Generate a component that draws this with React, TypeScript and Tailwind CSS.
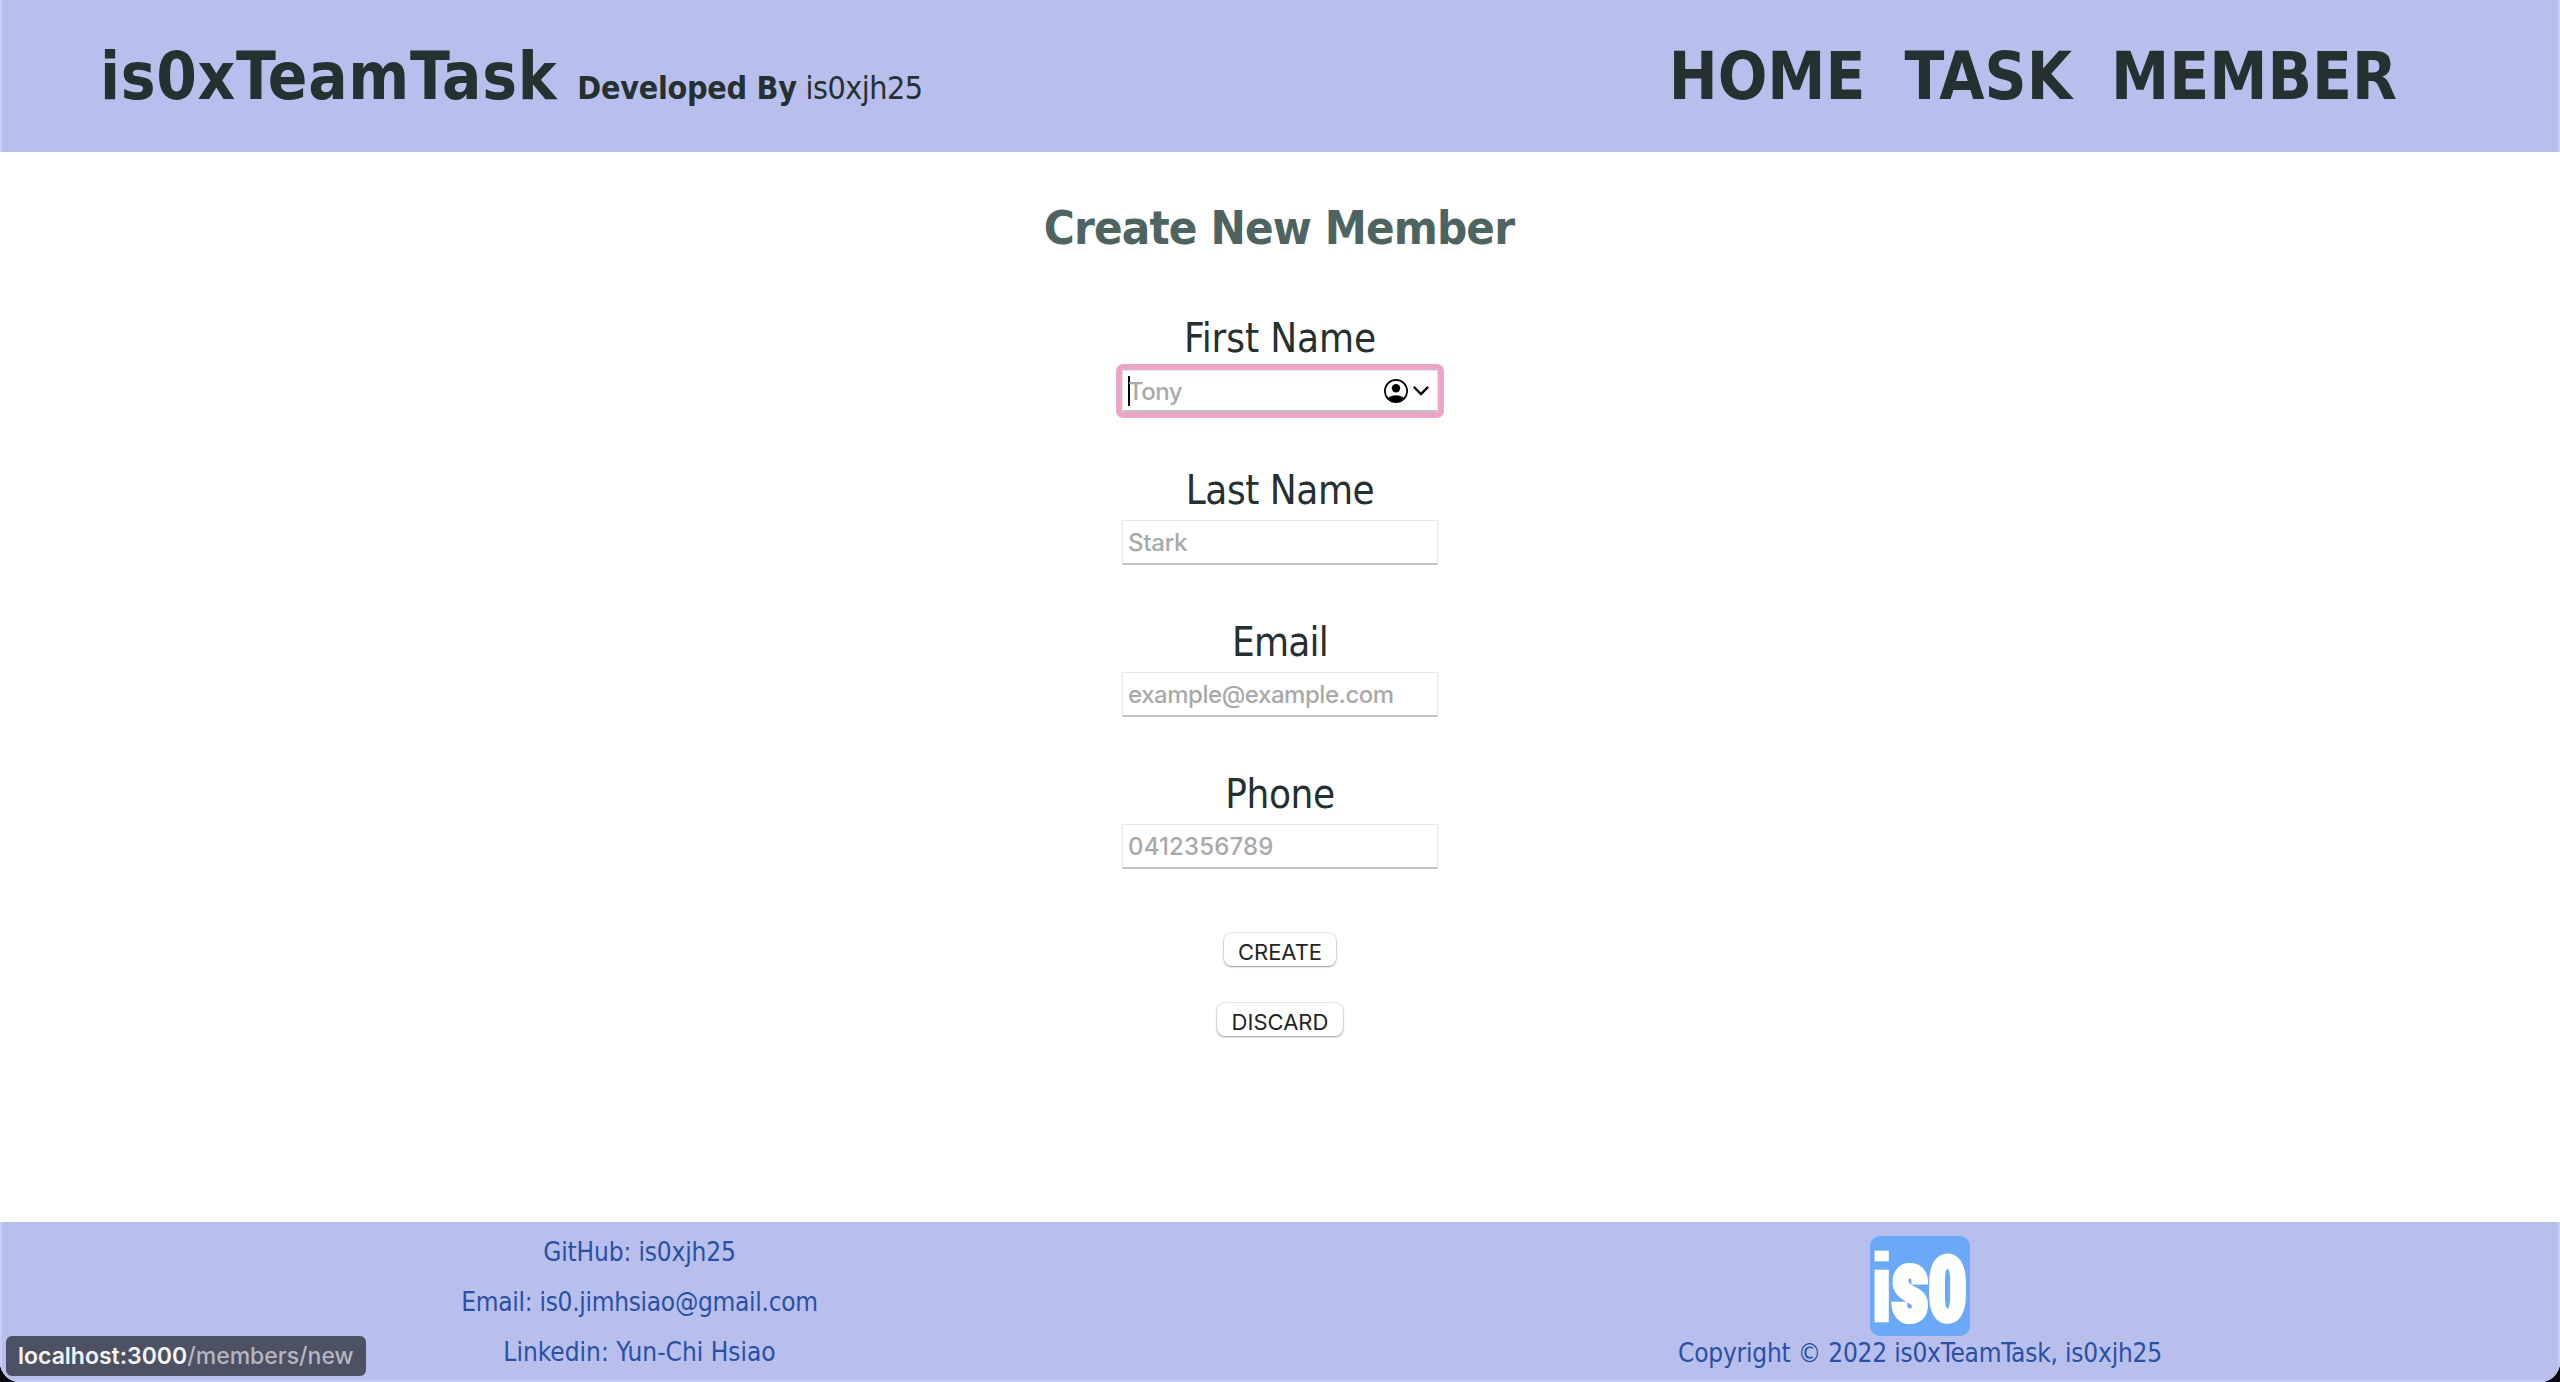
type FieldProps = {
  label: string;
  placeholder: string;
  labelSpacing: string;
  textSpacing: string;
  focused?: boolean;
};

function AccountIcon() {
  return (
    <svg width="24" height="24" viewBox="0 0 24 24" fill="none">
      <defs>
        <clipPath id="face">
          <circle cx="12" cy="12" r="11.2" />
        </clipPath>
      </defs>
      <circle cx="12" cy="12" r="11.1" stroke="#000" strokeWidth="1.7" />
      <circle cx="12" cy="9.3" r="4.2" fill="#000" />
      <ellipse cx="12" cy="21.6" rx="9" ry="5.3" fill="#000" clipPath="url(#face)" />
    </svg>
  );
}

function Field({ label, placeholder, labelSpacing, textSpacing, focused }: FieldProps) {
  return (
    <div className="flex flex-col items-center gap-[6px]">
      <label className={`text-[40px] leading-[48px] text-[#243130] ${labelSpacing}`}>{label}</label>
      <div
        className={`flex w-[316px] items-center border border-b-2 border-[#e8e8e8] border-b-[#c2c2c2] bg-white pl-[5px] pr-[8px] ${
          focused ? "mb-[1px] mt-[2px] h-[42px] rounded-[1px] outline-[6px] outline-[#eba5c6]" : "h-[45px]"
        }`}
      >
        {focused && <span className="-mr-[2px] h-[30px] w-[2px] bg-black" />}
        <span
          className={`flex-1 pt-[2px] font-['Inter',sans-serif] text-[24px] font-medium leading-[30px] text-[#a9a9a9] ${textSpacing}`}
        >
          {placeholder}
        </span>
        {focused && (
          <span className="flex items-center gap-[5px]">
            <AccountIcon />
            <svg width="16" height="10" viewBox="0 0 16 10" fill="none">
              <path d="M1.5 1.5 8 8.2 14.5 1.5" stroke="#000" strokeWidth="2.4" strokeLinecap="round" strokeLinejoin="round" />
            </svg>
          </span>
        )}
      </div>
    </div>
  );
}

function FormButton({ label, width }: { label: string; width: string }) {
  return (
    <button
      className={`flex h-[33px] items-center justify-center rounded-[8px] bg-white pt-[4px] font-['Inter',sans-serif] text-[22px] leading-[28px] text-[#242424] shadow-[0_0_1px_1px_rgba(0,0,0,0.09),0_1px_2px_rgba(0,0,0,0.35)] ${width}`}
    >
      {label}
    </button>
  );
}

function Logo() {
  return (
    <svg width="100" height="100" viewBox="0 0 100 100" className="overflow-visible">
      <rect width="100" height="100" rx="10" fill="#69a9f8" />
      <g fill="#fff" stroke="#fff">
        <text
          transform="translate(-2.1 85.5)"
          fontFamily="Liberation Sans"
          fontWeight="700"
          fontSize="99"
          strokeWidth="0.5"
        >
          i
        </text>
        <text
          transform="translate(21.5 84.7) scale(0.84 1.06)"
          className="[font-stretch:75%]"
          fontFamily="Roboto"
          fontWeight="900"
          fontSize="98"
          strokeWidth="4"
        >
          s
        </text>
        <text
          transform="translate(57.5 84.7) scale(0.8 0.93)"
          className="[font-stretch:75%]"
          fontFamily="Roboto"
          fontWeight="900"
          fontSize="98"
          strokeWidth="4"
        >
          0
        </text>
      </g>
    </svg>
  );
}

export default function App() {
  return (
    <div className="bg-[#07090f]">
      <div className="relative flex h-[1382px] w-full flex-col overflow-hidden rounded-b-[20px] bg-white font-['DejaVu_Sans_Condensed','DejaVu_Sans',sans-serif] [font-stretch:condensed]">
        <header className="flex h-[152px] items-baseline justify-between border-x-2 border-[#c7cdf2] bg-[#b8bfed] pl-[98px] pr-[161px] pt-[1px] text-[#243130]">
          <div className="flex items-baseline">
            <h1 className="text-[65px] font-bold leading-[151px] tracking-[0.67px]">is0xTeamTask</h1>
            <p className="ml-[20px] text-[32px] tracking-[-0.5px]">
              <b className="tracking-[-0.28px]">Developed By</b> is0xjh25
            </p>
          </div>
          <nav className="flex gap-[39px] text-[65px] font-bold leading-[151px]">
            <a>HOME</a>
            <a>TASK</a>
            <a>MEMBER</a>
          </nav>
        </header>

        <main className="flex flex-1 flex-col items-center pt-[48px]">
          <h2 className="-translate-x-px text-[47px] font-bold leading-[56px] tracking-[-0.88px] text-[#4e6461]">
            Create New Member
          </h2>
          <form className="mt-[58px] flex flex-col items-center gap-[53px]">
            <Field label="First Name" placeholder="Tony" labelSpacing="tracking-[-0.1px]" textSpacing="tracking-[-0.5px]" focused />
            <Field label="Last Name" placeholder="Stark" labelSpacing="tracking-[-0.45px]" textSpacing="tracking-[-0.25px]" />
            <Field label="Email" placeholder="example@example.com" labelSpacing="tracking-[-0.75px]" textSpacing="tracking-[-0.45px]" />
            <Field label="Phone" placeholder="0412356789" labelSpacing="tracking-[-0.4px]" textSpacing="tracking-[0.15px]" />
          </form>
          <div className="mt-[64px] flex flex-col items-center gap-[37px]">
            <FormButton label="CREATE" width="w-[112px]" />
            <FormButton label="DISCARD" width="w-[126px]" />
          </div>
        </main>

        <footer className="grid h-[160px] grid-cols-2 border-x-2 border-b-2 border-[#c7cdf2] bg-[#b8bfed] text-center text-[26px] text-[#2850a5]">
          <div className="flex flex-col pr-[3px] pt-[5px] leading-[50px]">
            <a className="tracking-[-0.15px]">GitHub: is0xjh25</a>
            <a className="tracking-[-0.29px]">Email: is0.jimhsiao@gmail.com</a>
            <a>Linkedin: Yun-Chi Hsiao</a>
          </div>
          <div className="flex flex-col items-center pl-[2px] pt-[14px] leading-[34px]">
            <Logo />
            <p className="tracking-[-0.2px]">Copyright © 2022 is0xTeamTask, is0xjh25</p>
          </div>
        </footer>

        <div className="absolute bottom-[6px] left-[6px] flex h-[40px] w-[360px] items-center rounded-[6px] bg-[#4c5163] pl-[12px] font-['Inter',sans-serif] text-[23px] leading-[40px]">
          <span className="font-semibold text-[#f3f4f6]">localhost:3000</span>
          <span className="font-medium text-[#b4b7c0]">/members/new</span>
        </div>
      </div>
    </div>
  );
}
